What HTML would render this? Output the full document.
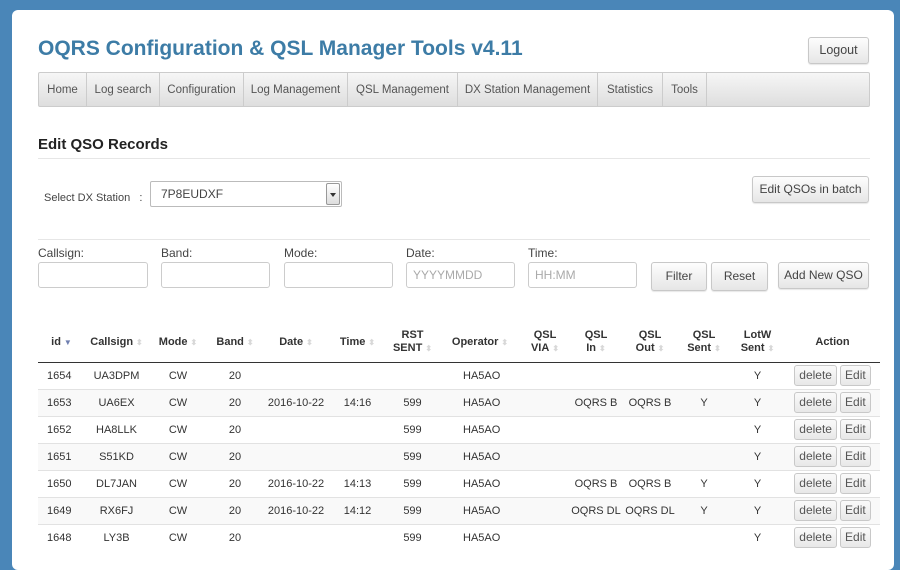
<!DOCTYPE html>
<html><head><meta charset="utf-8"><style>
*{box-sizing:border-box;margin:0;padding:0}
body{width:900px;height:551px;overflow:hidden;background:#4a86b8;font-family:"Liberation Sans",Arial,sans-serif;color:#333;position:relative}
.panel{position:absolute;left:12px;top:10px;width:882px;height:560px;background:#fff;border-radius:6px}
.a{position:absolute}
h1{position:absolute;left:38px;top:37px;font-size:21px;font-weight:bold;color:#3d7ca6;white-space:nowrap}
.btn{position:absolute;border:1px solid #c8c8c8;border-radius:3px;background:linear-gradient(#fdfdfd,#e6e6e6);font-size:12px;color:#444;text-align:center;box-shadow:0 1px 1px rgba(0,0,0,.1);white-space:nowrap}
.nav{position:absolute;left:38px;top:72px;width:832px;height:35px;background:linear-gradient(#f6f6f6,#dedede);border:1px solid #ccc;border-radius:2px;font-size:11.5px;color:#555;white-space:nowrap}
.nav span{position:absolute;top:0;height:33px;line-height:34px;border-right:1px solid #ccc;text-align:center}
h2{position:absolute;left:38px;top:136px;font-size:15px;font-weight:bold;color:#222}
.hr{position:absolute;left:38px;width:832px;height:1px;background:#e6e6e6}
.lbl{position:absolute;font-size:12px;color:#444}
.inp{position:absolute;top:262px;height:26px;border:1px solid #ccc;border-radius:3px;background:#fff;font-size:12px;color:#aaa;padding-left:6px;line-height:24px}
table{position:absolute;left:38px;top:323px;width:842px;border-collapse:collapse;table-layout:fixed;font-size:11px}
th{height:39px;font-weight:bold;color:#333;border-bottom:1px solid #333;text-align:center;line-height:13px;vertical-align:middle}
th i{font-style:normal;color:#d8d8d8;font-size:8px;margin-left:3px}
td{height:27px;text-align:center;border-top:1px solid #e2e2e2;color:#333}
tr:nth-child(odd) td{background:#f9f9f9}
td.l{text-align:left;padding-left:9px}
td.o{text-align:left;padding-left:23px}
.b{display:inline-block;border:1px solid #c8c8c8;border-radius:3px;background:linear-gradient(#fafafa,#e8e8e8);font-size:12px;color:#555;height:21px;line-height:19px;padding:0 4px}
</style></head><body>
<div class="panel"></div>
<h1>OQRS Configuration &amp; QSL Manager Tools v4.11</h1>
<div class="btn" style="left:808px;top:37px;width:61px;height:27px;line-height:25px;font-size:12.5px">Logout</div>
<div class="nav">
<span style="left:0;width:48px">Home</span>
<span style="left:48px;width:73px">Log search</span>
<span style="left:121px;width:84px">Configuration</span>
<span style="left:205px;width:104px">Log Management</span>
<span style="left:309px;width:110px">QSL Management</span>
<span style="left:419px;width:140px">DX Station Management</span>
<span style="left:559px;width:65px">Statistics</span>
<span style="left:624px;width:44px">Tools</span>
</div>
<h2>Edit QSO Records</h2>
<div class="hr" style="top:158px"></div>
<div class="lbl" style="left:44px;top:192px;font-size:11px">Select DX Station &nbsp; :</div>
<div class="a" style="left:150px;top:181px;width:192px;height:26px;border:1px solid #bbb;border-radius:2px;font-size:12px;color:#444;padding:5px 0 0 10px">7P8EUDXF
<div class="a" style="right:1px;top:1px;width:14px;height:22px;border:1px solid #999;border-radius:2px;background:linear-gradient(#fff,#ddd)"><div class="a" style="left:3px;top:9px;border:3px solid transparent;border-top:4px solid #333"></div></div></div>
<div class="btn" style="left:752px;top:176px;width:117px;height:27px;line-height:25px">Edit QSOs in batch</div>
<div class="hr" style="top:239px"></div>
<div class="lbl" style="left:38px;top:246px">Callsign:</div>
<div class="lbl" style="left:161px;top:246px">Band:</div>
<div class="lbl" style="left:284px;top:246px">Mode:</div>
<div class="lbl" style="left:406px;top:246px">Date:</div>
<div class="lbl" style="left:528px;top:246px">Time:</div>
<div class="inp" style="left:38px;width:110px"></div>
<div class="inp" style="left:161px;width:109px"></div>
<div class="inp" style="left:284px;width:109px"></div>
<div class="inp" style="left:406px;width:109px">YYYYMMDD</div>
<div class="inp" style="left:528px;width:109px">HH:MM</div>
<div class="btn" style="left:651px;top:262px;width:56px;height:29px;line-height:27px">Filter</div>
<div class="btn" style="left:711px;top:262px;width:57px;height:29px;line-height:27px">Reset</div>
<div class="btn" style="left:778px;top:262px;width:91px;height:27px;line-height:25px">Add New QSO</div>
<table>
<colgroup><col style="width:47px"><col style="width:63px"><col style="width:60px"><col style="width:54px"><col style="width:68px"><col style="width:55px"><col style="width:55px"><col style="width:80px"><col style="width:50px"><col style="width:52px"><col style="width:56px"><col style="width:52px"><col style="width:55px"><col style="width:95px"></colgroup>
<tr><th>id<i style="color:#6f7fb0">▼</i></th><th>Callsign<i>⬍</i></th><th>Mode<i>⬍</i></th><th>Band<i>⬍</i></th><th>Date<i>⬍</i></th><th>Time<i>⬍</i></th><th>RST<br>SENT<i>⬍</i></th><th>Operator<i>⬍</i></th><th>QSL<br>VIA<i>⬍</i></th><th>QSL<br>In<i>⬍</i></th><th>QSL<br>Out<i>⬍</i></th><th>QSL<br>Sent<i>⬍</i></th><th>LotW<br>Sent<i>⬍</i></th><th>Action</th></tr>
<tr><td class="l">1654</td><td>UA3DPM</td><td>CW</td><td>20</td><td></td><td></td><td></td><td class="o">HA5AO</td><td></td><td></td><td></td><td></td><td>Y</td><td><span class="b">delete</span> <span class="b">Edit</span></td></tr>
<tr><td class="l">1653</td><td>UA6EX</td><td>CW</td><td>20</td><td>2016-10-22</td><td>14:16</td><td>599</td><td class="o">HA5AO</td><td></td><td>OQRS B</td><td>OQRS B</td><td>Y</td><td>Y</td><td><span class="b">delete</span> <span class="b">Edit</span></td></tr>
<tr><td class="l">1652</td><td>HA8LLK</td><td>CW</td><td>20</td><td></td><td></td><td>599</td><td class="o">HA5AO</td><td></td><td></td><td></td><td></td><td>Y</td><td><span class="b">delete</span> <span class="b">Edit</span></td></tr>
<tr><td class="l">1651</td><td>S51KD</td><td>CW</td><td>20</td><td></td><td></td><td>599</td><td class="o">HA5AO</td><td></td><td></td><td></td><td></td><td>Y</td><td><span class="b">delete</span> <span class="b">Edit</span></td></tr>
<tr><td class="l">1650</td><td>DL7JAN</td><td>CW</td><td>20</td><td>2016-10-22</td><td>14:13</td><td>599</td><td class="o">HA5AO</td><td></td><td>OQRS B</td><td>OQRS B</td><td>Y</td><td>Y</td><td><span class="b">delete</span> <span class="b">Edit</span></td></tr>
<tr><td class="l">1649</td><td>RX6FJ</td><td>CW</td><td>20</td><td>2016-10-22</td><td>14:12</td><td>599</td><td class="o">HA5AO</td><td></td><td>OQRS DL</td><td>OQRS DL</td><td>Y</td><td>Y</td><td><span class="b">delete</span> <span class="b">Edit</span></td></tr>
<tr><td class="l">1648</td><td>LY3B</td><td>CW</td><td>20</td><td></td><td></td><td>599</td><td class="o">HA5AO</td><td></td><td></td><td></td><td></td><td>Y</td><td><span class="b">delete</span> <span class="b">Edit</span></td></tr>
</table>
</body></html>
